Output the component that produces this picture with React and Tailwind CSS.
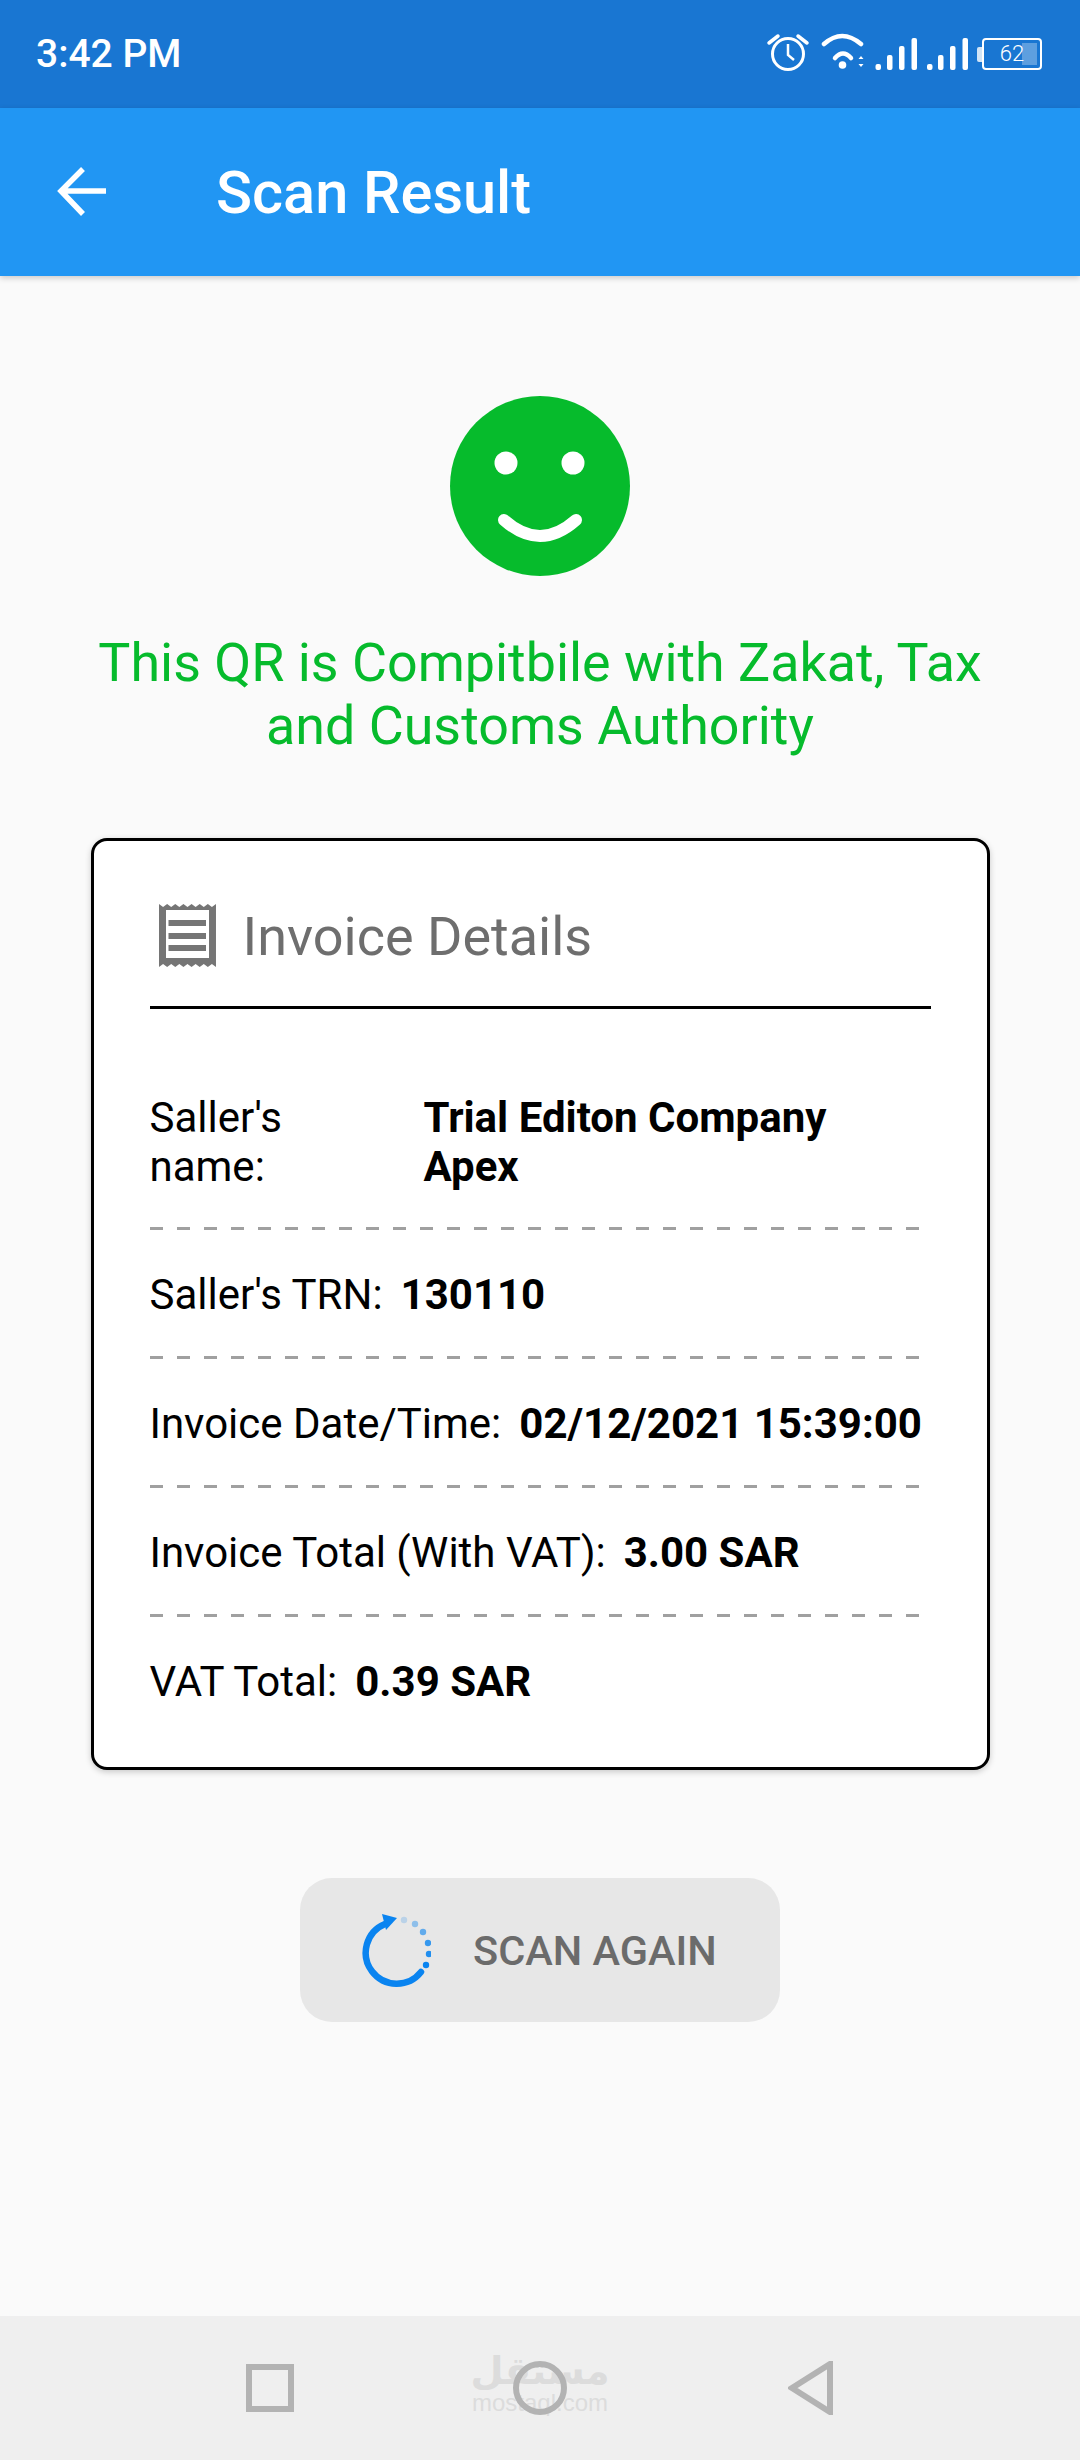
function StatusIcons() {
  const bars = [[875.5, 65, 6], [887, 56, 15], [899, 47, 24], [911.5, 39, 32], [927, 65, 6], [938, 56, 15], [950, 47, 24], [962.5, 39, 32]];
  return (
    <svg width="217" height="50" viewBox="760 30 217 50" fill="none" className="block">
      {/* alarm */}
      <circle cx="788" cy="55" r="15.5" stroke="#fff" strokeWidth="3" />
      <path d="M788 45V56L794 61" stroke="#fff" strokeWidth="2.5" />
      <path d="M769 44L778 37M807 44L798 37" stroke="#fff" strokeWidth="3.5" strokeLinecap="round" />
      {/* wifi */}
      <path d="M824 45Q842 29 861 45" stroke="#fff" strokeWidth="4.5" strokeLinecap="round" />
      <path d="M835 59Q843 50 851 59" stroke="#fff" strokeWidth="4.5" strokeLinecap="round" />
      <circle cx="842.5" cy="66" r="3.8" fill="#fff" />
      <path d="M858.5 60L861 57L863.5 60ZM858.5 65L861 68L863.5 65Z" fill="#fff" />
      {bars.map(([x, y, h]) => (
        <rect key={x} x={x} y={y} width="5.5" height={h} rx="2" fill="#fff" />
      ))}
    </svg>
  );
}

function Battery() {
  return (
    <div className="flex items-center">
      <div className="w-[5px] h-[15px] bg-white/80 rounded-l-[2px]" />
      <div className="relative w-[60px] h-[32px] border-2 border-white rounded-[4px] flex items-center justify-center">
        <div className="absolute right-[3px] top-[3px] bottom-[3px] w-[15px] bg-white/30" />
        <span className="relative text-[22px] leading-none font-light text-white">62</span>
      </div>
    </div>
  );
}

// zigzag top and bottom edges of the receipt
const teeth = Array.from({ length: 14 }, (_, i) => `l4.07 ${i % 2 ? -3 : 3}`).join(" ");
const teethBack = Array.from({ length: 14 }, (_, i) => `l-4.07 ${i % 2 ? 3 : -3}`).join(" ");

function ReceiptIcon() {
  return (
    <svg width="57" height="63" viewBox="0 0 57 63" className="block">
      <path fillRule="evenodd" fill="#757575" d={`M0 0 ${teeth} V63 ${teethBack} Z M7 6 V54 H50 V6 Z`} />
      <rect x="9.5" y="16" width="37.5" height="6" fill="#757575" />
      <rect x="9.5" y="29" width="37.5" height="6" fill="#757575" />
      <rect x="9.5" y="41" width="37.5" height="6" fill="#757575" />
    </svg>
  );
}

function ScanIcon() {
  const dots = [[403, 1920, 0.2], [414, 1924, 0.4], [422, 1932, 0.6], [427, 1943, 0.8], [428, 1954, 0.9], [425, 1965, 1]];
  return (
    <svg width="70" height="74" viewBox="360 1913 70 74" fill="none" className="block">
      <path d="M420 1972A31 31 0 1 1 384 1924" stroke="#0a84f0" strokeWidth="6.5" strokeLinecap="round" />
      <path d="M381 1914L396 1918L385 1930Z" fill="#0a84f0" />
      {dots.map(([x, y, o]) => (
        <circle key={x} cx={x} cy={y} r="3.2" fill="#0a84f0" opacity={o} />
      ))}
    </svg>
  );
}

function Row({ label, value, first }) {
  return (
    <div className={first ? "flex pb-[36px]" : "flex gap-[18px] pt-[40px] pb-[37px]"}>
      <span className={first ? "w-[274px] shrink-0 whitespace-pre-line" : "whitespace-nowrap"}>{label}</span>
      <span className="font-bold">{value}</span>
    </div>
  );
}

function Dash() {
  return <div className="h-[3px] w-[772px] bg-[repeating-linear-gradient(90deg,#a0a0a0_0_13px,transparent_13px_27px)]" />;
}

export default function App() {
  return (
    <div className="w-[1080px] h-[2460px] flex flex-col bg-[#fafafa] font-['Roboto',sans-serif] overflow-hidden">
      {/* status bar */}
      <div className="h-[108px] bg-[#1976d2] flex items-center justify-between pl-[36px] pr-[38px] text-white">
        <span className="text-[39px] font-medium">3:42 PM</span>
        <div className="flex items-center">
          <StatusIcons />
          <Battery />
        </div>
      </div>

      {/* app bar */}
      <div className="h-[168px] bg-[#2196f3] flex items-center shadow-[0_2px_6px_rgba(0,0,0,0.2)]">
        <svg width="56" height="56" viewBox="0 0 56 56" fill="none" className="ml-[54px]">
          <path d="M8 27H52M29 5L7 27L29 50" stroke="#fff" strokeWidth="5.5" />
        </svg>
        <span className="ml-[106px] pt-[4px] text-[59.5px] font-medium text-white">Scan Result</span>
      </div>

      {/* result */}
      <div className="flex-1 flex flex-col items-center">
        <svg width="180" height="180" viewBox="0 0 180 180" className="mt-[120px] block">
          <circle cx="90" cy="90" r="90" fill="#06bb2c" />
          <circle cx="56" cy="67" r="11.5" fill="#fff" />
          <circle cx="123" cy="67" r="11.5" fill="#fff" />
          <path d="M54 124Q90 156 126 124" stroke="#fff" strokeWidth="12" strokeLinecap="round" fill="none" />
        </svg>
        <p className="mt-[55px] text-[53.8px] leading-[63px] text-center text-[#06bb2c]">
          This QR is Compitbile with Zakat, Tax
          <br />
          and Customs Authority
        </p>

        {/* invoice card */}
        <div className="mt-[81px] w-[899px] h-[932px] bg-white border-[3px] border-black rounded-[16px] shadow-[0_2px_6px_rgba(0,0,0,0.2)] px-[56px] text-[42px] leading-[49px] text-black">
          <div className="h-[168px] pt-[24px] border-b-[3px] border-black flex items-center">
            <div className="ml-[9px]">
              <ReceiptIcon />
            </div>
            <span className="ml-[27px] pt-[2px] text-[54px] leading-[62px] text-[#6e6e6e]">Invoice Details</span>
          </div>
          <div className="pt-[84px]">
            <Row first label={"Saller's\nname:"} value="Trial Editon Company Apex" />
            <Dash />
            <Row label="Saller's TRN:" value="130110" />
            <Dash />
            <Row label="Invoice Date/Time:" value="02/12/2021 15:39:00" />
            <Dash />
            <Row label="Invoice Total (With VAT):" value="3.00 SAR" />
            <Dash />
            <Row label="VAT Total:" value="0.39 SAR" />
          </div>
        </div>

        {/* scan again */}
        <button className="mt-[108px] w-[480px] h-[144px] bg-[#e7e7e7] rounded-[32px] flex items-center pl-[61px]">
          <ScanIcon />
          <span className="ml-[42px] pt-[3px] text-[41.5px] font-medium text-[#6b6b6b]">SCAN AGAIN</span>
        </button>
      </div>

      {/* nav bar */}
      <div className="relative h-[144px] bg-[#efefef] flex items-center pl-[246px]">
        <div className="absolute left-[474px] top-[32px] w-[132px] flex flex-col items-center text-[#dcdcdc]">
          <span className="text-[38px] leading-[46px] font-bold font-['DejaVu_Sans',sans-serif]">مستقل</span>
          <span className="text-[24px] leading-[18px] font-['Liberation_Sans',sans-serif]">mostaql.com</span>
        </div>
        <div className="relative w-[48px] h-[48px] border-[6px] border-[#b3b3b3]" />
        <div className="relative ml-[219px] w-[54px] h-[54px] border-[6px] border-[#b3b3b3] rounded-full" />
        <svg width="46" height="54" viewBox="0 0 46 54" fill="none" className="relative ml-[221px]">
          <path d="M42 3V51L4 27Z" stroke="#b3b3b3" strokeWidth="6" />
        </svg>
      </div>
    </div>
  );
}
